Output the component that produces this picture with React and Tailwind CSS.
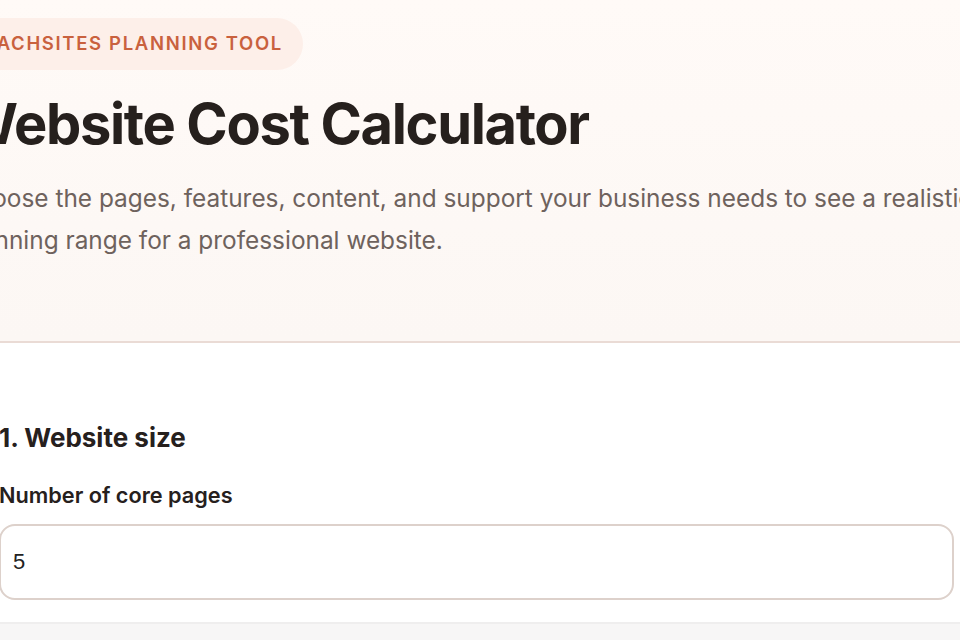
import React from "react";

const Hero = () => (
  <section className="border-b-2 border-[#eadbd5] bg-gradient-to-b from-[#fffaf7] to-[#fcf7f4]">
    <div className="-ml-[40px] pt-[18px] pb-[80px]">
      <span className="-ml-[8px] inline-flex h-[52px] items-center rounded-full bg-[#fdefe9] pl-[18px] pr-[20px] text-[18.5px] font-semibold uppercase tracking-[0.09em] text-[#c9613e]">
        Beachsites Planning Tool
      </span>
      <h1 className="mt-[24px] text-[56px] font-bold leading-[1.1] tracking-[-0.024em] text-[#26201d]">
        Website Cost Calculator
      </h1>
      <p className="mt-[21px] w-[1040px] text-[24.4px] leading-[42px] text-[#6e625d]">
        Choose the pages, features, content, and support your business needs to see a realistic
        planning range for a professional website.
      </p>
    </div>
  </section>
);

const SizeSection = () => (
  <section className="bg-white pt-[78px] pb-[22px]">
    <div className="-ml-[1px] w-[955px]">
      <h2 className="text-[26px] font-bold leading-[1.3] text-[#26201d]">1. Website size</h2>
      <label className="mt-[27px] block text-[21.7px] font-semibold leading-[1.3] text-[#26201d]">
        Number of core pages
      </label>
      <input
        type="number"
        defaultValue={5}
        className="mt-[14px] block h-[76px] w-full rounded-[16px] border-2 border-[#ddd1cb] bg-white px-[12px] text-[22px] text-[#222] outline-none"
        style={{ fontFamily: '"Liberation Sans", Arial, sans-serif' }}
      />
    </div>
  </section>
);

export default function App() {
  return (
    <div className="min-h-[640px] overflow-hidden bg-white font-['Inter',sans-serif]">
      <Hero />
      <SizeSection />
      <div className="h-[40px] border-t-2 border-[#efeeee] bg-[#f7f6f6]" />
    </div>
  );
}
